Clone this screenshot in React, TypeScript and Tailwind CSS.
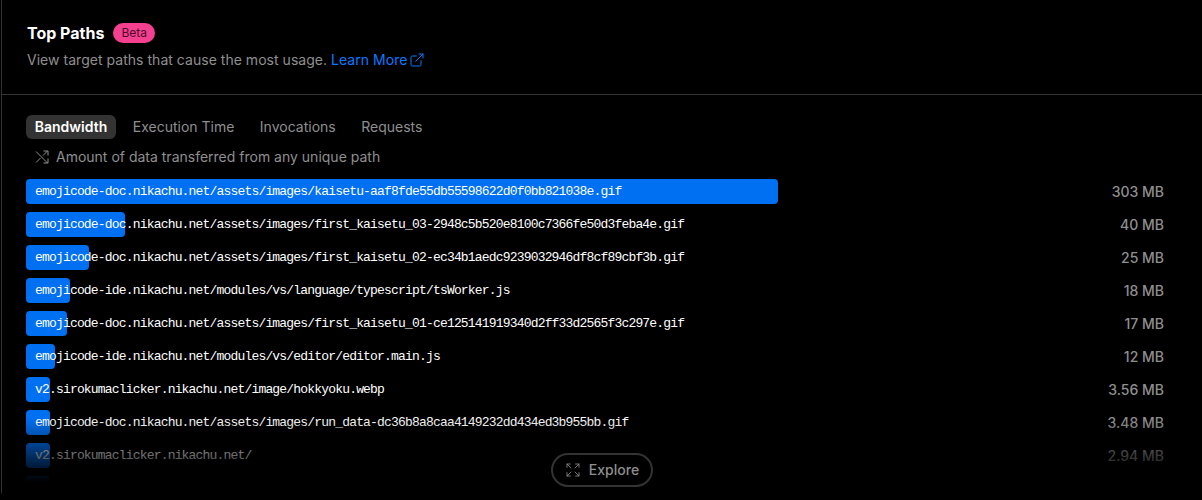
import { ExternalLink, Expand } from 'lucide-react'

const rows = [
  { path: 'emojicode-doc.nikachu.net/assets/images/kaisetu-aaf8fde55db55598622d0f0bb821038e.gif', width: 752, value: '303 MB' },
  { path: 'emojicode-doc.nikachu.net/assets/images/first_kaisetu_03-2948c5b520e8100c7366fe50d3feba4e.gif', width: 99, value: '40 MB' },
  { path: 'emojicode-doc.nikachu.net/assets/images/first_kaisetu_02-ec34b1aedc9239032946df8cf89cbf3b.gif', width: 63, value: '25 MB' },
  { path: 'emojicode-ide.nikachu.net/modules/vs/language/typescript/tsWorker.js', width: 44, value: '18 MB' },
  { path: 'emojicode-doc.nikachu.net/assets/images/first_kaisetu_01-ce125141919340d2ff33d2565f3c297e.gif', width: 41, value: '17 MB' },
  { path: 'emojicode-ide.nikachu.net/modules/vs/editor/editor.main.js', width: 29, value: '12 MB' },
  { path: 'v2.sirokumaclicker.nikachu.net/image/hokkyoku.webp', width: 24, value: '3.56 MB' },
  { path: 'emojicode-doc.nikachu.net/assets/images/run_data-dc36b8a8caa4149232dd434ed3b955bb.gif', width: 24, value: '3.48 MB' },
  { path: 'v2.sirokumaclicker.nikachu.net/', width: 24, value: '2.94 MB' },
  { path: 'emojicode-doc.nikachu.net/assets/images/run_data-dc36b8a8caa4149232dd434ed3b955bb.gif', width: 24, value: '2.61 MB' },
]

const tabs = ['Execution Time', 'Invocations', 'Requests']

function ShuffleIcon() {
  return (
    <svg width="14" height="14" viewBox="0 0 14 14" fill="none" stroke="#8f8f8f" strokeWidth="1" className="shrink-0">
      <path d="M1 1.5 L12.5 13 M1 12.5 L5.5 8 M8 5.5 L12.5 1 M8.5 1 H13 V5.5 M8.5 13 H13 V8.5" />
    </svg>
  )
}

export default function App() {
  return (
    <div className="h-[500px] w-full overflow-hidden bg-black pl-px font-['Inter',sans-serif]">
      <div className="relative flex h-[499px] flex-col rounded-bl-lg border-b border-l border-[#333333] border-b-transparent">
        <div className="h-[95px] shrink-0 border-b border-[#333333] pl-[25px] pt-[22px]">
          <div className="flex h-[21px] items-center gap-[9px]">
            <h2 className="text-base leading-6 font-bold text-white">Top Paths</h2>
            <span className="flex h-5 items-center rounded-full bg-[#f5408f] px-[8px] text-xs text-[#4f0b2c]">Beta</span>
          </div>
          <p className="mt-[7px] flex items-center text-sm leading-5 tracking-[0.03px] text-[#8f8f8f]">
            View target paths that cause the most usage.
            <span className="ml-1 flex items-center gap-[2px] text-[#0a7aff]">
              Learn More
              <ExternalLink size={16} strokeWidth={1.5} />
            </span>
          </p>
        </div>

        <div className="min-h-0 flex-1 overflow-hidden pl-[24px] pr-[38px] pt-5">
          <div className="flex items-center gap-2 text-sm">
            <span className="flex h-6 w-[90px] items-center justify-center rounded-md bg-[#333333] font-semibold text-white">Bandwidth</span>
            {tabs.map((tab) => (
              <span key={tab} className="flex h-6 items-center px-[8.75px] text-[#8f8f8f]">{tab}</span>
            ))}
          </div>
          <div className="mt-[8px] flex h-5 items-center gap-[7px] pl-[9px] text-sm text-[#8f8f8f]">
            <ShuffleIcon />
            <span>Amount of data transferred from any unique path</span>
          </div>
          <div className="mt-[12px] flex flex-col gap-2">
            {rows.map((row) => (
              <div key={row.value} className="flex h-[25px] shrink-0 items-center justify-between">
                <div className="relative flex h-full items-center pl-[9px]">
                  <div className="absolute left-0 top-0 h-full rounded-[4px] bg-[#0070f3]" style={{ width: row.width }} />
                  <span className="relative font-['Liberation_Mono',monospace] text-[13px] tracking-[-0.82px] whitespace-nowrap text-white">{row.path}</span>
                </div>
                <span className="text-sm font-medium text-[#8f8f8f]">{row.value}</span>
              </div>
            ))}
          </div>
        </div>

        <div className="pointer-events-none absolute inset-x-0 bottom-[16px] h-[64px] bg-gradient-to-b from-transparent to-black" />
        <div className="pointer-events-none absolute inset-x-0 bottom-0 h-[16px] bg-black" />
        <button className="absolute bottom-[11px] left-1/2 flex h-[34px] w-[102px] -translate-x-1/2 items-center justify-center gap-2 rounded-full border-2 border-[#333333] bg-black text-sm font-medium text-[#8f8f8f]">
          <Expand size={16} strokeWidth={1.25} />
          Explore
        </button>
      </div>
    </div>
  )
}
